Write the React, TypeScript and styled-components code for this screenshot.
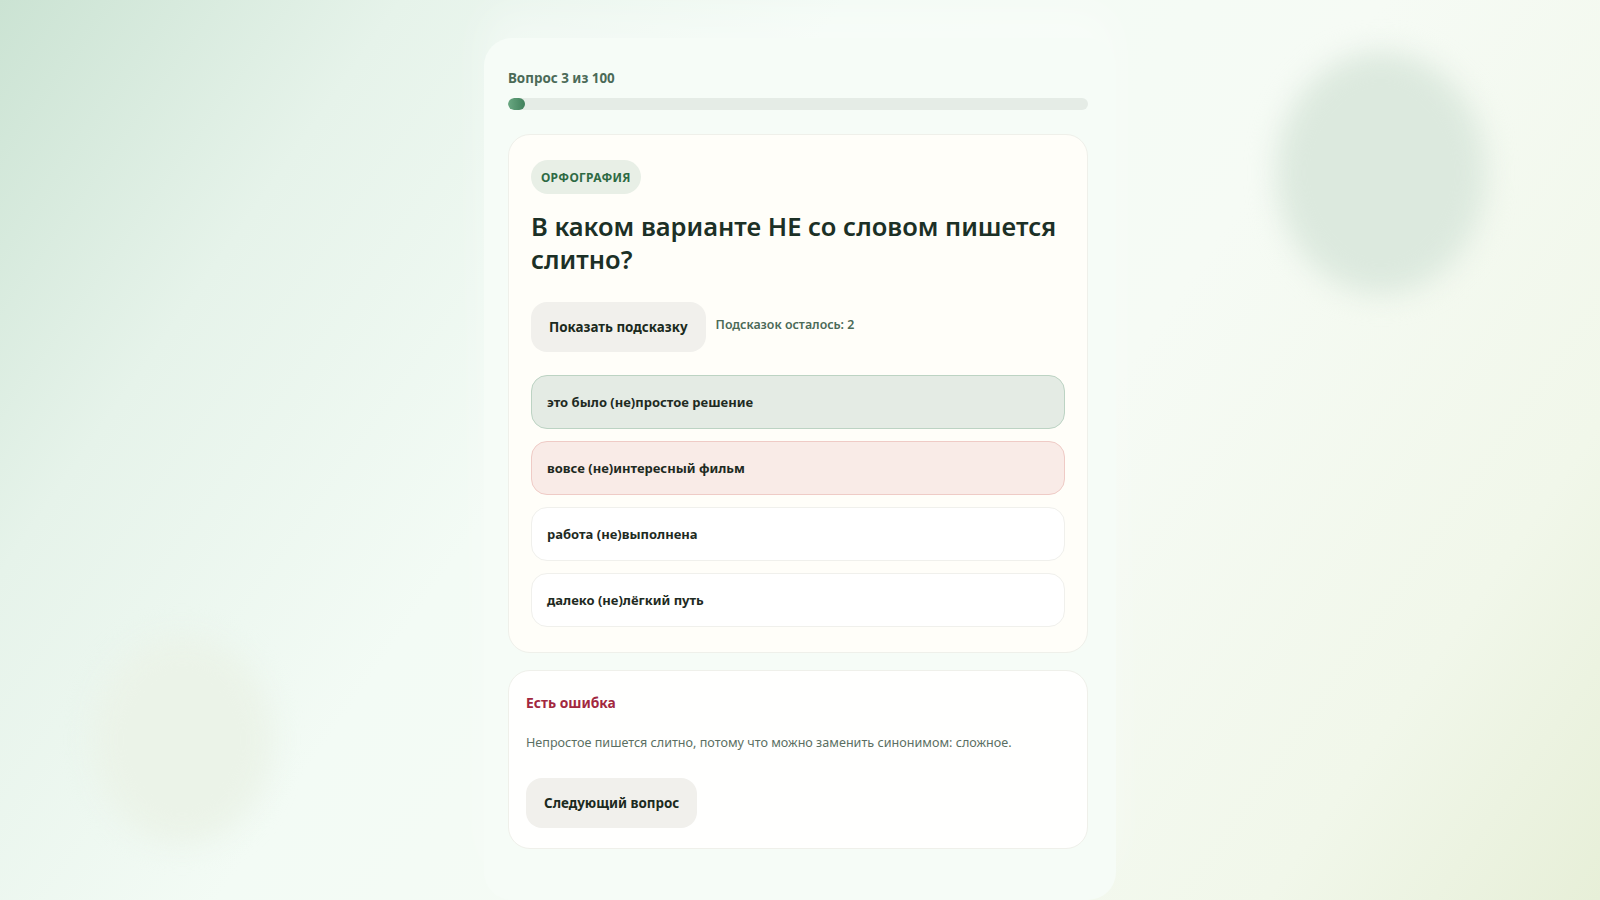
import React from "react";
import styled, { createGlobalStyle } from "styled-components";

const GlobalStyle = createGlobalStyle`
  html, body {
    margin: 0;
    padding: 0;
  }
  body {
    font-family: "Noto Sans", "Open Sans", "DejaVu Sans", sans-serif;
    color: #1d2b22;
  }
  * {
    box-sizing: border-box;
  }
`;

const Page = styled.div`
  position: relative;
  display: flex;
  justify-content: center;
  height: 900px;
  padding-top: 38px;
  overflow: hidden;
  background: linear-gradient(
    125deg,
    #cbe3d3 0%,
    #e6f3ea 18%,
    #f3fbf5 38%,
    #f6fbf5 62%,
    #f1f7ea 85%,
    #e7efd8 100%
  );
`;

const Blob = styled.div<{ size: number; color: string }>`
  position: absolute;
  width: ${(p) => p.size}px;
  height: ${(p) => p.size * 1.15}px;
  border-radius: 50%;
  background: ${(p) => p.color};
  filter: blur(14px);
`;

const Shell = styled.main`
  position: relative;
  z-index: 1;
  width: 632px;
  padding: 29px 28px 40px 24px;
  background: #f6fcf7;
  border-radius: 28px;
  box-shadow: 0 -30px 40px rgba(255, 255, 255, 0.35);
`;

const ProgressLabel = styled.div`
  font-size: 13.4px;
  line-height: 22px;
  font-weight: 700;
  color: #4b6a57;
`;

const ProgressTrack = styled.div`
  margin-top: 9px;
  height: 12px;
  border-radius: 6px;
  background: #e5ece6;
  overflow: hidden;
`;

const ProgressFill = styled.div`
  height: 100%;
  min-width: 17px;
  border-radius: 6px;
  background: linear-gradient(90deg, #6aa882, #3f7f5a);
`;

const Card = styled.section<{ tone: "cream" | "white" }>`
  margin-top: ${(p) => (p.tone === "cream" ? "24px" : "17px")};
  background: ${(p) => (p.tone === "cream" ? "#fffef9" : "#fffffe")};
  border: 1px solid #eff0ea;
  border-radius: 22px;
`;

const QuestionBody = styled.div`
  padding: 25px 22px 25px;
`;

const Chip = styled.span`
  display: inline-flex;
  align-items: center;
  height: 34px;
  padding: 0 10px;
  border-radius: 17px;
  background: #e8efe6;
  color: #2e6a44;
  font-size: 12px;
  font-weight: 700;
  letter-spacing: 0.3px;
`;

const Title = styled.h1`
  margin: 16px 0 0;
  font-size: 25.5px;
  line-height: 33px;
  font-weight: 600;
  color: #1c3026;
`;

const HintRow = styled.div`
  display: flex;
  align-items: center;
  gap: 10px;
  margin-top: 26px;
`;

const SoftButton = styled.button`
  height: 50px;
  padding: 0 18px;
  border: none;
  border-radius: 16px;
  background: #f1f0ec;
  color: #1b2a20;
  font-family: inherit;
  font-size: 13.4px;
  font-weight: 700;
  cursor: pointer;
`;

const HintCounter = styled.span`
  padding-bottom: 6px;
  font-size: 12.4px;
  font-weight: 600;
  color: #4b6a57;
`;

const OptionList = styled.div`
  display: flex;
  flex-direction: column;
  gap: 12px;
  margin-top: 23px;
`;

type OptionState = "picked" | "wrong" | "idle";

const optionColors: Record<OptionState, { bg: string; border: string }> = {
  picked: { bg: "#e4ebe4", border: "#bcd3c3" },
  wrong: { bg: "#f9ebe7", border: "#efcbc6" },
  idle: { bg: "#ffffff", border: "#f0f0ec" },
};

const Option = styled.div<{ state: OptionState }>`
  display: flex;
  align-items: center;
  height: 54px;
  padding: 0 15px;
  border-radius: 16px;
  background: ${(p) => optionColors[p.state].bg};
  border: 1px solid ${(p) => optionColors[p.state].border};
  font-size: 13px;
  font-weight: 700;
  color: #1e2a22;
`;

const FeedbackBody = styled.div`
  padding: 21px 17px 20px;
`;

const FeedbackTitle = styled.div`
  font-size: 13.8px;
  line-height: 22px;
  font-weight: 700;
  color: #a2283f;
`;

const FeedbackText = styled.p`
  margin: 18px 0 0;
  font-size: 12.6px;
  line-height: 21px;
  font-weight: 400;
  color: #5b6f63;
`;

const NextRow = styled.div`
  margin-top: 25px;
`;

const options: { text: string; state: OptionState }[] = [
  { text: "это было (не)простое решение", state: "picked" },
  { text: "вовсе (не)интересный фильм", state: "wrong" },
  { text: "работа (не)выполнена", state: "idle" },
  { text: "далеко (не)лёгкий путь", state: "idle" },
];

const App = () => {
  const current = 3;
  const total = 100;

  return (
    <>
      <GlobalStyle />
      <Page>
        <Blob size={210} color="#dce9de" style={{ left: 1276, top: 52 }} />
        <Blob size={180} color="#ebf3e8" style={{ left: 92, top: 636 }} />
        <Shell>
          <ProgressLabel>
            Вопрос {current} из {total}
          </ProgressLabel>
          <ProgressTrack>
            <ProgressFill style={{ width: `${(current / total) * 100}%` }} />
          </ProgressTrack>

          <Card tone="cream">
            <QuestionBody>
              <Chip>ОРФОГРАФИЯ</Chip>
              <Title>В каком варианте НЕ со словом пишется слитно?</Title>
              <HintRow>
                <SoftButton>Показать подсказку</SoftButton>
                <HintCounter>Подсказок осталось: 2</HintCounter>
              </HintRow>
              <OptionList>
                {options.map((o) => (
                  <Option key={o.text} state={o.state}>
                    {o.text}
                  </Option>
                ))}
              </OptionList>
            </QuestionBody>
          </Card>

          <Card tone="white">
            <FeedbackBody>
              <FeedbackTitle>Есть ошибка</FeedbackTitle>
              <FeedbackText>
                Непростое пишется слитно, потому что можно заменить синонимом:
                сложное.
              </FeedbackText>
              <NextRow>
                <SoftButton>Следующий вопрос</SoftButton>
              </NextRow>
            </FeedbackBody>
          </Card>
        </Shell>
      </Page>
    </>
  );
};

export default App;
